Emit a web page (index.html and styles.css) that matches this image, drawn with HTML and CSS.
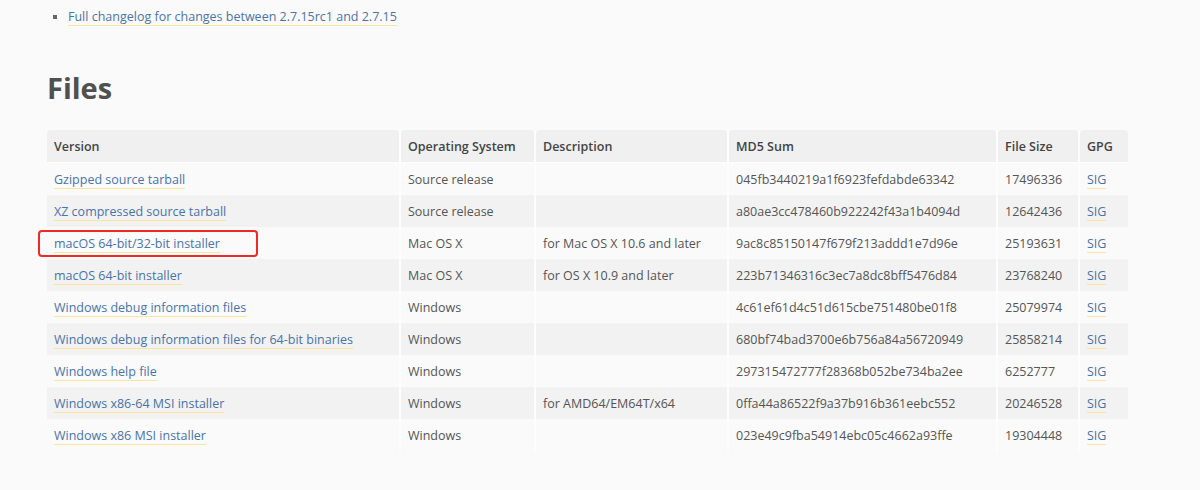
FILE: index.html
```html
<!DOCTYPE html>
<html>
<head>
<meta charset="utf-8">
<link rel="stylesheet" href="styles.css">
</head>
<body>
<div class="page">
  <ul class="notes">
    <li><a href="#">Full changelog for changes between 2.7.15rc1 and 2.7.15</a></li>
  </ul>
  <h1 class="title">Files</h1>
  <table class="files">
    <thead>
      <tr><th class="c-ver">Version</th><th class="c-os">Operating System</th><th class="c-desc">Description</th><th class="c-md5">MD5 Sum</th><th class="c-size">File Size</th><th class="c-gpg">GPG</th></tr>
    </thead>
    <tbody>
      <tr><td><a href="#">Gzipped source tarball</a></td><td>Source release</td><td></td><td>045fb3440219a1f6923fefdabde63342</td><td>17496336</td><td><a href="#">SIG</a></td></tr>
      <tr><td><a href="#">XZ compressed source tarball</a></td><td>Source release</td><td></td><td>a80ae3cc478460b922242f43a1b4094d</td><td>12642436</td><td><a href="#">SIG</a></td></tr>
      <tr><td class="marked"><a href="#">macOS 64-bit/32-bit installer</a><span class="highlight"></span></td><td>Mac OS X</td><td>for Mac OS X 10.6 and later</td><td>9ac8c85150147f679f213addd1e7d96e</td><td>25193631</td><td><a href="#">SIG</a></td></tr>
      <tr><td><a href="#">macOS 64-bit installer</a></td><td>Mac OS X</td><td>for OS X 10.9 and later</td><td>223b71346316c3ec7a8dc8bff5476d84</td><td>23768240</td><td><a href="#">SIG</a></td></tr>
      <tr><td><a href="#">Windows debug information files</a></td><td>Windows</td><td></td><td>4c61ef61d4c51d615cbe751480be01f8</td><td>25079974</td><td><a href="#">SIG</a></td></tr>
      <tr><td><a href="#">Windows debug information files for 64-bit binaries</a></td><td>Windows</td><td></td><td>680bf74bad3700e6b756a84a56720949</td><td>25858214</td><td><a href="#">SIG</a></td></tr>
      <tr><td><a href="#">Windows help file</a></td><td>Windows</td><td></td><td>297315472777f28368b052be734ba2ee</td><td>6252777</td><td><a href="#">SIG</a></td></tr>
      <tr><td><a href="#">Windows x86-64 MSI installer</a></td><td>Windows</td><td>for AMD64/EM64T/x64</td><td>0ffa44a86522f9a37b916b361eebc552</td><td>20246528</td><td><a href="#">SIG</a></td></tr>
      <tr><td><a href="#">Windows x86 MSI installer</a></td><td>Windows</td><td></td><td>023e49c9fba54914ebc05c4662a93ffe</td><td>19304448</td><td><a href="#">SIG</a></td></tr>
    </tbody>
  </table>
</div>
</body>
</html>
```

FILE: styles.css
```css
html, body {
  margin: 0;
  padding: 0;
  background: #fafafa;
}
body {
  font-family: "Open Sans", "Noto Sans", sans-serif;
  color: #555;
  font-size: 12.5px;
}
.page {
  padding: 0 0 0 47px;
}
a {
  color: #4a73a8;
  text-decoration: none;
  border-bottom: 1px solid #fbe59a;
}
.notes {
  margin: 0;
  padding: 7px 0 0 21px;
  list-style: square;
  color: #666;
  font-size: 12.5px;
  line-height: 20px;
}
.title {
  margin: 41px 0 0 0;
  font-size: 29px;
  line-height: 40px;
  font-weight: 700;
  color: #505050;
}
.files {
  margin-top: 22px;
  border-collapse: separate;
  border-spacing: 0;
  width: 1081px;
  table-layout: fixed;
}
.files th, .files td {
  box-sizing: border-box;
  text-align: left;
  padding: 0 7px;
  height: 32px;
  border-right: 2px solid #fdfdfd;
  white-space: nowrap;
  overflow: visible;
}
.files th:last-child, .files td:last-child {
  border-right: none;
}
.files th {
  height: 33px;
  background: #f0f0f0;
  font-weight: 600;
  color: #444;
  border-bottom: 1px solid #fdfdfd;
  border-radius: 4px 4px 0 0;
}
.files tbody tr:nth-child(even) td {
  background: #f2f2f2;
}
.c-ver { width: 354px; }
.c-os { width: 135px; }
.c-desc { width: 193px; }
.c-md5 { width: 269px; }
.c-size { width: 82px; }
.c-gpg { width: 48px; }
.marked {
  position: relative;
}
.highlight {
  position: absolute;
  left: -9px;
  top: 3px;
  width: 216px;
  height: 23px;
  border: 2px solid #ee2a24;
  border-radius: 4px;
}
```
